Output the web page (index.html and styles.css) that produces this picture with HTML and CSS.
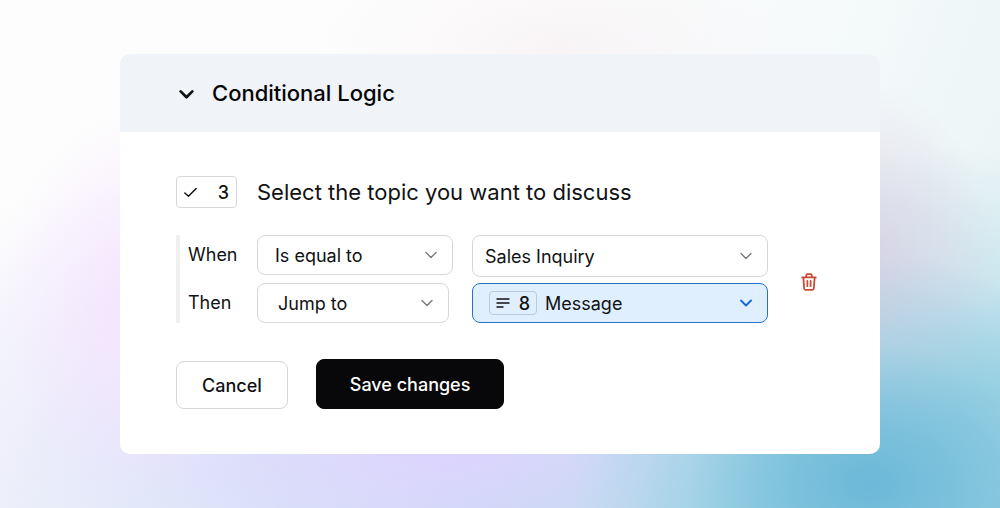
FILE: index.html
```html
<!DOCTYPE html>
<html lang="en">
<head>
  <meta charset="UTF-8">
  <meta name="viewport" content="width=device-width, initial-scale=1">
  <title>Conditional Logic</title>
  <link rel="stylesheet" href="styles.css">
</head>
<body>

  <main class="card">
    <!-- Header -->
    <header class="card-header">
      <svg class="header-chevron" viewBox="0 0 16 16" aria-hidden="true"><path d="M2.5 6 8 11.5 13.5 6"/></svg>
      <h1>Conditional Logic</h1>
    </header>

    <form class="card-body">
      <!-- Question -->
      <div class="question">
        <span class="badge">
          <svg viewBox="0 0 16 16" aria-hidden="true"><path d="M2 8.6 5.8 12 14 3.8"/></svg>
          3
        </span>
        <h2>Select the topic you want to discuss</h2>
      </div>

      <!-- Rule -->
      <div class="rule">
        <div class="clauses">
          <div class="clause clause-when">
            <label for="condition">When</label>
            <div class="field">
              <select id="condition"><option>Is equal to</option></select>
              <svg class="chevron" viewBox="0 0 12 12" aria-hidden="true"><path d="M1 3.5 6 8.5 11 3.5"/></svg>
            </div>
            <div class="field field-value">
              <select aria-label="Answer"><option>Sales Inquiry</option></select>
              <svg class="chevron" viewBox="0 0 12 12" aria-hidden="true"><path d="M1 3.5 6 8.5 11 3.5"/></svg>
            </div>
          </div>
          <div class="clause clause-then">
            <label for="action">Then</label>
            <div class="field field-action">
              <select id="action"><option>Jump to</option></select>
              <svg class="chevron" viewBox="0 0 12 12" aria-hidden="true"><path d="M1 3.5 6 8.5 11 3.5"/></svg>
            </div>
            <div class="field field-value field-active">
              <select aria-label="Target question"><option>Message</option></select>
              <span class="field-badge">
                <svg viewBox="0 0 14 14" aria-hidden="true"><path d="M1 3H13M1 7H13M1 11H7"/></svg>
                8
              </span>
              <svg class="chevron" viewBox="0 0 12 12" aria-hidden="true"><path d="M1 3.5 6 8.5 11 3.5"/></svg>
            </div>
          </div>
        </div>
        <button type="button" class="delete" aria-label="Delete rule">
          <svg viewBox="0 0 16 18" aria-hidden="true"><path d="M1.2 4.4H14.8M2.4 4.6 3.1 15.2Q3.2 16.8 4.6 16.8H11.4Q12.8 16.8 12.9 15.2L13.6 4.6M5.2 4.2V2.4Q5.2 1.2 6.4 1.2H9.6Q10.8 1.2 10.8 2.4V4.2M6.4 8V13.2M9.6 8V13.2"/></svg>
        </button>
      </div>

      <!-- Actions -->
      <div class="actions">
        <button type="button" class="btn">Cancel</button>
        <button type="submit" class="btn btn-primary">Save changes</button>
      </div>
    </form>
  </main>

</body>
</html>
```
FILE: styles.css
```css
* {
  margin: 0;
  padding: 0;
  box-sizing: border-box;
}

body {
  min-height: 100vh;
  display: flex;
  align-items: center;
  justify-content: center;
  font-family: Inter, "Liberation Sans", sans-serif;
  font-size: 18px;
  color: #111214;
  background:
    radial-gradient(ellipse 30% 45% at 87% 95%, #6cb8d8 0%, rgba(118, 190, 219, 0.85) 25%, rgba(140, 203, 224, 0.45) 60%, rgba(160, 212, 228, 0) 100%),
    radial-gradient(ellipse 14% 38% at 86% 54%, rgba(216, 206, 226, 0.9), rgba(216, 206, 226, 0) 100%),
    radial-gradient(ellipse 32% 26% at 45% 88%, rgba(222, 210, 255, 0.9), rgba(222, 214, 255, 0) 100%),
    radial-gradient(ellipse 14% 38% at 14% 60%, rgba(244, 226, 255, 0.9), rgba(244, 230, 255, 0) 100%),
    radial-gradient(ellipse 24% 20% at 56% 9%, rgba(247, 241, 244, 0.7), rgba(247, 241, 244, 0) 100%),
    radial-gradient(ellipse 58% 75% at 98% 104%, #8dcade 0%, rgba(150, 208, 225, 0.9) 35%, rgba(175, 218, 232, 0.6) 60%, rgba(215, 235, 240, 0) 100%),
    radial-gradient(ellipse 50% 60% at 48% 106%, #ccdaf6, rgba(218, 226, 250, 0) 100%),
    radial-gradient(ellipse 40% 50% at 16% 86%, rgba(234, 232, 252, 0.9), rgba(240, 242, 250, 0) 100%),
    linear-gradient(to bottom, rgba(240, 248, 248, 0) 50%, #f2f8f8 100%),
    linear-gradient(110deg, #fdfdfd 45%, #f4f9fa 75%, #e6f2f3 100%);
}

.card {
  width: 76%;
  border-radius: 10px;
  background: #fff;
  overflow: hidden;
}

.card-header {
  display: flex;
  align-items: center;
  gap: 17px;
  height: 78px;
  padding: 0 58px;
  background: #f0f3f8;
}

h1 {
  font-size: 22px;
  font-weight: 500;
  line-height: 28px;
  color: #050506;
}

svg {
  fill: none;
  stroke: currentColor;
  stroke-linecap: round;
  stroke-linejoin: round;
}

.header-chevron {
  width: 17px;
  height: 17px;
  stroke-width: 2.6;
}

.card-body {
  padding: 44px 55px 45px 56px;
}

.question {
  display: flex;
  align-items: center;
  gap: 20px;
}

.badge {
  display: flex;
  align-items: center;
  justify-content: space-between;
  width: 61px;
  height: 32px;
  padding: 0 7px 0 6px;
  border: 1px solid #d6d7da;
  border-radius: 4px;
  font-weight: 500;
}

.badge svg {
  width: 15px;
  height: 15px;
  stroke-width: 1.6;
}

h2 {
  font-size: 22px;
  font-weight: 400;
  line-height: 28px;
}

.rule {
  display: flex;
  align-items: center;
  gap: 25px;
  margin-top: 27px;
}

.clauses {
  flex: 1;
  display: flex;
  flex-direction: column;
  gap: 6px;
  border-left: 4px solid #f0f0f1;
}

.clause {
  display: grid;
  grid-template-columns: 58px 196px 1fr;
  align-items: start;
  column-gap: 19px;
}

.clause label {
  padding-left: 8px;
  line-height: 39px;
}

.field {
  position: relative;
}

.field-action {
  width: 192px;
}

.field select {
  display: block;
  width: 100%;
  height: 40px;
  padding: 0 40px 0 17px;
  appearance: none;
  border: 1px solid #d6d7da;
  border-radius: 8px;
  background: #fff;
  font: inherit;
  color: inherit;
}

.field-action select {
  padding-left: 20px;
}

.field-value select {
  padding-left: 12px;
}

.clause-when .field-value select {
  height: 42px;
}

.chevron {
  position: absolute;
  top: 0;
  bottom: 0;
  right: 16px;
  width: 12px;
  height: 12px;
  margin: auto 0;
  color: #77787c;
  stroke-width: 1.4;
  pointer-events: none;
}

.field-active select {
  padding-left: 72px;
  border-color: #2472cc;
  background: #e0effe;
}

.field-active .chevron {
  color: #1464d2;
  stroke-width: 1.8;
}

.field-badge {
  position: absolute;
  top: 8px;
  left: 17px;
  display: flex;
  align-items: center;
  justify-content: space-between;
  width: 48px;
  height: 24px;
  padding: 0 6px;
  border: 1px solid #b7cce2;
  border-radius: 4px;
  font-weight: 500;
  pointer-events: none;
}

.field-badge svg {
  width: 14px;
  height: 14px;
  stroke-width: 1.4;
}

.delete {
  display: flex;
  align-items: center;
  justify-content: center;
  width: 32px;
  height: 32px;
  margin-top: 6px;
  border: none;
  background: none;
  color: #c94a35;
  cursor: pointer;
}

.delete svg {
  width: 16px;
  height: 18px;
  stroke-width: 1.8;
}

.actions {
  display: flex;
  align-items: flex-end;
  gap: 28px;
  margin-top: 36px;
}

.btn {
  height: 48px;
  padding: 0 25px;
  border: 1px solid #d6d7da;
  border-radius: 8px;
  background: #fff;
  font: inherit;
  font-weight: 500;
  color: inherit;
  cursor: pointer;
}

.btn-primary {
  height: 50px;
  padding: 0 33px;
  border-color: #08080a;
  background: #08080a;
  color: #fff;
}
```
